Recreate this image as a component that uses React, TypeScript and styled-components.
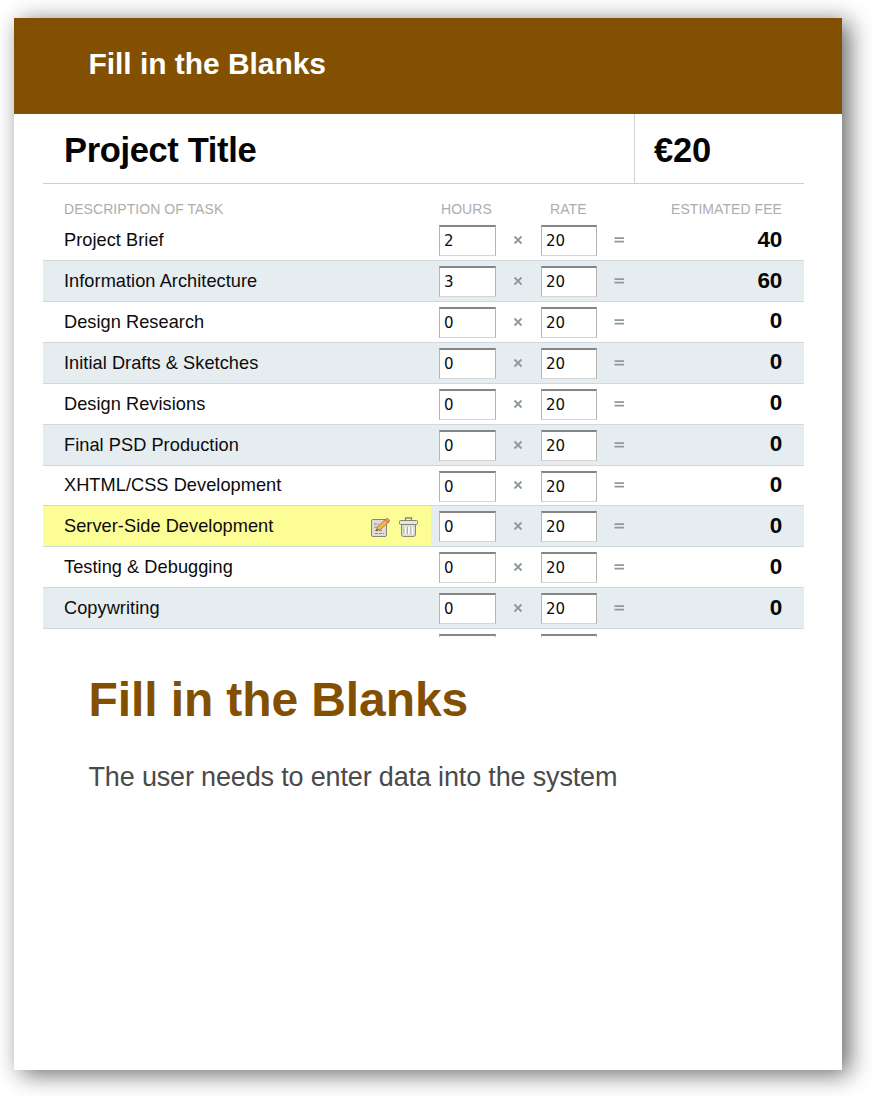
import React from 'react';
import styled, { createGlobalStyle } from 'styled-components';

const GlobalStyle = createGlobalStyle`
  body {
    margin: 0;
    background: #fff;
    font-family: 'Liberation Sans', Arial, Helvetica, sans-serif;
  }
`;

const Page = styled.div`
  box-sizing: border-box;
  height: 1096px;
  padding: 18px 30px 26px 14px;
  overflow: hidden;
`;

const Card = styled.article`
  height: 1052px;
  background: #fff;
  box-shadow: 7px 4px 23px rgba(0, 0, 0, 0.6);
`;

const CardHeader = styled.header`
  box-sizing: border-box;
  height: 96px;
  padding: 29px 74.5px 0;
  background: #825000;
  color: #fff;
  font-size: 30px;
  font-weight: bold;
  line-height: 34px;
  letter-spacing: -0.05px;
`;

const Estimate = styled.section`
  height: 523px;
  margin: 0 38px 0 29px;
  overflow: hidden;
  color: #0c0c0c;
`;

const ProjectBar = styled.div`
  display: flex;
  box-sizing: border-box;
  height: 70px;
  border-bottom: 1px solid #cdd0d3;
  font-size: 34.5px;
  font-weight: bold;
  line-height: 72px;
  color: #050505;
`;

const ProjectTitle = styled.div`
  flex: 1;
  padding-left: 21px;
  letter-spacing: -0.35px;
`;

const ProjectTotal = styled.div`
  box-sizing: border-box;
  width: 170px;
  padding-left: 19px;
  border-left: 1px solid #cdd2d6;
  letter-spacing: -0.2px;
`;

const columns = '396px 57px 45px 56px 46px 1fr';

const Labels = styled.div`
  display: grid;
  grid-template-columns: 396px 102px 102px 1fr;
  height: 36.2px;
  padding-right: 22px;
  font-size: 14px;
  line-height: 50px;
  letter-spacing: 0.06px;
  color: #adadad;
`;

const Label = styled.span<{ $indent?: number; $end?: boolean }>`
  padding-left: ${({ $indent = 0 }) => $indent}px;
  text-align: ${({ $end }) => ($end ? 'right' : 'left')};
  white-space: nowrap;
`;

const Row = styled.div<{ $shaded: boolean }>`
  display: grid;
  grid-template-columns: ${columns};
  box-sizing: border-box;
  height: 40.9px;
  padding-right: 22px;
  border-bottom: 1px solid #d0d8dc;
  background: ${({ $shaded }) => ($shaded ? '#e6edf1' : '#fff')};
`;

const Task = styled.div<{ $active?: boolean }>`
  display: flex;
  align-items: center;
  box-sizing: border-box;
  width: 388px;
  padding: 1px 12px 0 21px;
  background: ${({ $active }) => ($active ? '#fdfd96' : 'transparent')};
  font-size: 18.2px;
  letter-spacing: 0.05px;
`;

const Actions = styled.span`
  display: flex;
  gap: 8px;
  margin-left: auto;
`;

const Field = styled.div`
  box-sizing: border-box;
  height: 31px;
  margin-top: 5px;
  padding-left: 4px;
  border: 1px solid #b4b4b4;
  border-top: 2px solid #858585;
  border-bottom-color: #d5d5d5;
  background: #fff;
  font-family: 'DejaVu Sans', sans-serif;
  font-size: 15px;
  line-height: 28px;
`;

const Sign = styled.span`
  align-self: center;
  padding: 0 2px 2px 0;
  text-align: center;
  font-size: 18px;
  line-height: 20px;
`;

const Fee = styled.div`
  align-self: center;
  padding-bottom: 1px;
  text-align: right;
  font-size: 22.5px;
  font-weight: bold;
  line-height: 24px;
  letter-spacing: -0.3px;
  color: #050505;
`;

const CardBody = styled.section`
  padding: 36px 74.5px;
`;

const Heading = styled.h1`
  margin: 0;
  color: #825000;
  font-size: 48px;
  line-height: 54px;
  letter-spacing: -0.1px;
`;

const Summary = styled.p`
  margin: 34px 0 0;
  color: #4a4a4a;
  font-size: 27px;
  line-height: 32px;
  letter-spacing: -0.16px;
  white-space: nowrap;
`;

const EditIcon = () => (
  <svg width="20" height="22" viewBox="0 0 20 22" fill="none">
    <rect x="1.5" y="3.5" width="15" height="17" rx="1.5" fill="#deded6" stroke="#85857a" />
    <path d="M4 8h5M4 11h3M5 14.5h8M5 17.5h9" stroke="#8d8d86" strokeDasharray="3 1" />
    <path d="M6 15l2-5 8-7 3 3-8 7z" fill="#f4b64a" stroke="#a77632" strokeWidth=".8" />
    <path d="M15 4l2-2 3 2.5L18 7z" fill="#e88a82" stroke="#b9655e" strokeWidth=".6" />
    <path d="M6 15l1-2.5L8.5 14z" fill="#555" />
  </svg>
);

const TrashIcon = () => (
  <svg width="21" height="22" viewBox="0 0 21 22" fill="none">
    <path d="M7.5 4V2h6v2" stroke="#85857a" strokeWidth="1.3" />
    <path d="M3.5 8h14v10.5a2 2 0 0 1-2 2h-10a2 2 0 0 1-2-2z" fill="#deded6" stroke="#85857a" />
    <rect x="1.5" y="4.5" width="18" height="4" rx="1" fill="#e6e6de" stroke="#85857a" />
    <path d="M7 11v7M10.5 11v7M14 11v7" stroke="#fff" strokeWidth="2" />
    <path d="M6 11v7M9.5 11v7M13 11v7" stroke="#999991" strokeWidth=".8" />
  </svg>
);

const SignIcon = ({ times = false }: { times?: boolean }) => (
  <svg width="10" height="10" viewBox="0 0 10 10" stroke="#8d989f" strokeWidth="1.8">
    <path d={times ? 'M1.5 1.5l7 7M8.5 1.5l-7 7' : 'M.5 3.2h9.500M.5 6.700h9.500'} />
  </svg>
);

const tasks = [
  { name: 'Project Brief', hours: 2 },
  { name: 'Information Architecture', hours: 3 },
  { name: 'Design Research', hours: 0 },
  { name: 'Initial Drafts & Sketches', hours: 0 },
  { name: 'Design Revisions', hours: 0 },
  { name: 'Final PSD Production', hours: 0 },
  { name: 'XHTML/CSS Development', hours: 0 },
  { name: 'Server-Side Development', hours: 0, active: true },
  { name: 'Testing & Debugging', hours: 0 },
  { name: 'Copywriting', hours: 0 },
];
const rate = 20;

export default function App() {
  return (
    <Page>
      <GlobalStyle />
      <Card>
        <CardHeader>Fill in the Blanks</CardHeader>
        <Estimate>
          <ProjectBar>
            <ProjectTitle>Project Title</ProjectTitle>
            <ProjectTotal>€20</ProjectTotal>
          </ProjectBar>
          <Labels>
            <Label $indent={21}>DESCRIPTION OF TASK</Label>
            <Label $indent={2}>HOURS</Label>
            <Label $indent={9}>RATE</Label>
            <Label $end>ESTIMATED FEE</Label>
          </Labels>
          {tasks.map(({ name, hours, active }, i) => (
            <Row key={name} $shaded={i % 2 === 1}>
              <Task $active={active}>
                {name}
                {active && (
                  <Actions>
                    <EditIcon />
                    <TrashIcon />
                  </Actions>
                )}
              </Task>
              <Field>{hours}</Field>
              <Sign><SignIcon times /></Sign>
              <Field>{rate}</Field>
              <Sign><SignIcon /></Sign>
              <Fee>{hours * rate}</Fee>
            </Row>
          ))}
          <Row $shaded={false}>
            <Task />
            <Field />
            <span />
            <Field />
          </Row>
        </Estimate>
        <CardBody>
          <Heading>Fill in the Blanks</Heading>
          <Summary>The user needs to enter data into the system</Summary>
        </CardBody>
      </Card>
    </Page>
  );
}
